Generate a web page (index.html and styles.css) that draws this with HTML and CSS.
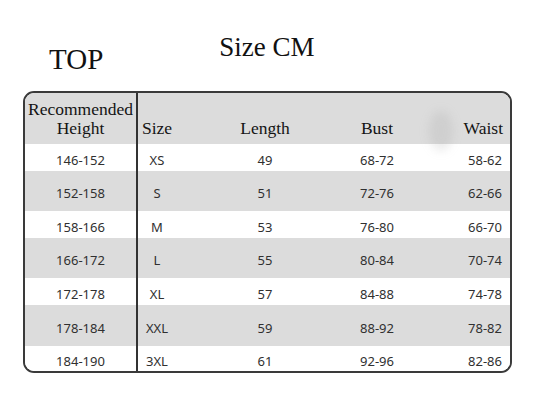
FILE: index.html
```html
<!DOCTYPE html>
<html>
<head>
<meta charset="utf-8">
<link rel="stylesheet" href="styles.css">
</head>
<body>
<div class="page">
  <div class="titles">
    <div class="top">TOP</div>
    <div class="size-cm">Size CM</div>
  </div>
  <div class="table">
    <div class="row head">
      <div class="c c1">Recommended<br>Height</div>
      <div class="c c2">Size</div>
      <div class="c c3">Length</div>
      <div class="c c4">Bust</div>
      <div class="c c5">Waist</div>
    </div>
    <div class="row w"><div class="c c1">146-152</div><div class="c c2">XS</div><div class="c c3">49</div><div class="c c4">68-72</div><div class="c c5">58-62</div></div>
    <div class="row g"><div class="c c1">152-158</div><div class="c c2">S</div><div class="c c3">51</div><div class="c c4">72-76</div><div class="c c5">62-66</div></div>
    <div class="row w"><div class="c c1">158-166</div><div class="c c2">M</div><div class="c c3">53</div><div class="c c4">76-80</div><div class="c c5">66-70</div></div>
    <div class="row g"><div class="c c1">166-172</div><div class="c c2">L</div><div class="c c3">55</div><div class="c c4">80-84</div><div class="c c5">70-74</div></div>
    <div class="row w"><div class="c c1">172-178</div><div class="c c2">XL</div><div class="c c3">57</div><div class="c c4">84-88</div><div class="c c5">74-78</div></div>
    <div class="row g g6"><div class="c c1">178-184</div><div class="c c2">XXL</div><div class="c c3">59</div><div class="c c4">88-92</div><div class="c c5">78-82</div></div>
    <div class="row w last"><div class="c c1">184-190</div><div class="c c2">3XL</div><div class="c c3">61</div><div class="c c4">92-96</div><div class="c c5">82-86</div></div>
  </div>
</div>
</body>
</html>
```
FILE: styles.css
```css
html, body {
  margin: 0;
  padding: 0;
  background: #ffffff;
}
.page {
  width: 533px;
  height: 415px;
  overflow: hidden;
}
.titles {
  display: flex;
  align-items: flex-start;
  height: 91px;
  font-family: "Liberation Serif", "Times New Roman", serif;
  color: #111;
}
.top {
  font-size: 29px;
  line-height: 29px;
  margin-left: 49px;
  margin-top: 45px;
}
.size-cm {
  font-size: 27px;
  line-height: 27px;
  margin-left: 116px;
  margin-top: 34px;
}
.table {
  margin-left: 23px;
  width: 489px;
  height: 282px;
  box-sizing: border-box;
  border: 2px solid #3a3a3a;
  border-radius: 11px;
  overflow: hidden;
  background: #fff;
  position: relative;
}
.table::after {
  content: "";
  position: absolute;
  left: 404px;
  top: 18px;
  width: 24px;
  height: 40px;
  border-radius: 50%;
  background: rgba(150,150,150,0.18);
  filter: blur(5px);
}
.row {
  display: grid;
  grid-template-columns: 113px 38px 178px 46px 110px;
  font-family: "Noto Sans", "Open Sans", sans-serif;
  font-size: 13px;
  line-height: 18px;
  color: #303030;
}
.c {
  text-align: center;
  white-space: nowrap;
}
.c1 {
  border-right: 2px solid #333;
}
.c5 {
  text-align: right;
  padding-right: 8px;
}
.head {
  height: 51px;
  background: #dcdcdc;
  font-family: "Liberation Serif", "Times New Roman", serif;
  font-size: 17.5px;
  line-height: 19px;
  color: #141414;
}
.head .c {
  box-sizing: border-box;
  padding-top: 7px;
  display: flex;
  align-items: flex-end;
  justify-content: center;
  padding-bottom: 6px;
}
.head .c5 {
  justify-content: flex-end;
  padding-right: 7px;
}
.w {
  height: 27px;
  background: #ffffff;
}
.w .c {
  padding-top: 7px;
}
.g {
  height: 40px;
  background: #dcdcdc;
}
.g .c {
  padding-top: 13px;
}
.g6 {
  height: 41px;
}
.g6 .c {
  padding-top: 14px;
}
.last {
  height: 25px;
}
.last .c {
  padding-top: 6px;
}
```
